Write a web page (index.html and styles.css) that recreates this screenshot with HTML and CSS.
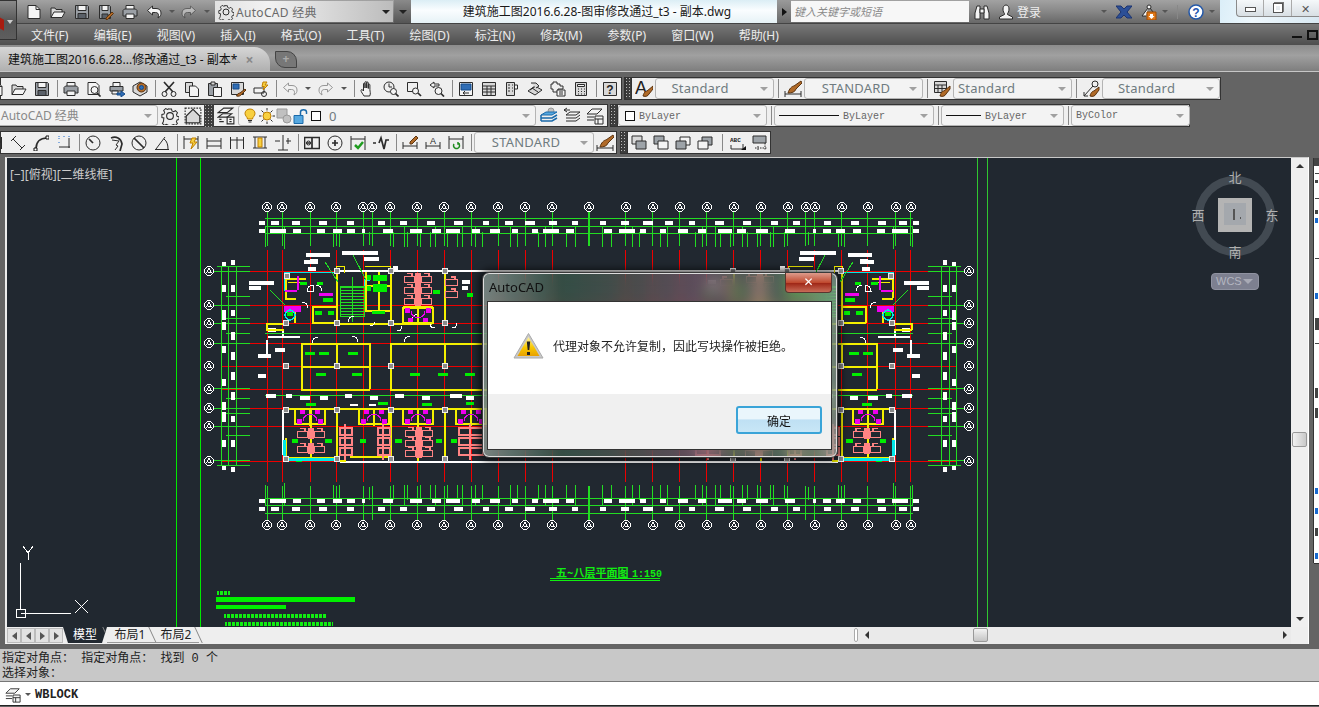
FILE: index.html
```html
<!DOCTYPE html>
<html lang="zh-CN">
<head>
<meta charset="utf-8">
<title>AutoCAD</title>
<link rel="stylesheet" href="styles.css">
</head>
<body>
<svg class="defs" width="0" height="0">
<defs>
<linearGradient id="warn" x1="0" y1="0" x2="0" y2="1"><stop offset="0" stop-color="#fff3a0"/><stop offset=".55" stop-color="#f8c800"/><stop offset="1" stop-color="#e8a000"/></linearGradient>
<symbol id="new" viewBox="0 0 16 16"><path class="wf" d="M2 1.500h8l4 4v9H2z"/><path d="M10 1.500v4h4"/></symbol>
<symbol id="open" viewBox="0 0 16 16"><path class="lf" d="M1 13.500V4h4l1 1.500h6V8"/><path class="wf" d="M1 13.500 4 8h11l-3 5.500z"/></symbol>
<symbol id="save" viewBox="0 0 16 16"><path class="gf" d="M1.500 1.500h12l1 1v12h-13z"/><path class="wf" d="M4 1.500h8v5H4z"/><path class="df" d="M4 9.500h8v5H4z"/></symbol>
<symbol id="saveas" viewBox="0 0 16 16"><path class="gf" d="M1.500 1.500h10l1 1v12h-11z"/><path class="wf" d="M4 1.500h6v5H4z"/><path class="df" d="M4 10h6v4.500H4z"/><path class="org" d="m8 14 6-6 1.500 1.500-6 6H8z"/></symbol>
<symbol id="print" viewBox="0 0 16 16"><path class="wf" d="M4 5V1.500h8V5"/><path class="gf" d="M1 6.500 2.500 5h11L15 6.500V12H1z"/><path class="wf" d="M4 10h8v4.500H4z"/></symbol>
<symbol id="undo" viewBox="0 0 16 16"><path class="wf" d="M6.500 2 1.500 6.500 6.500 11V8.500h3c2 0 3 1 3 3l-.5 2.500c2.500-1.500 3-3 3-5 0-3-2-4.500-5-4.500H6.500z"/></symbol>
<symbol id="redo" viewBox="0 0 16 16"><path class="wf" d="M9.500 2l5 4.500-5 4.500V8.500h-3c-2 0-3 1-3 3l.5 2.500C1.500 12.500 1 11 1 9c0-3 2-4.500 5-4.500h3.500z"/></symbol>
<symbol id="gear" viewBox="0 0 16 16"><path d="M6.500 1h3l.4 2 1.700.8 1.800-1 2 2-1 1.800.6 1.700 2 .4-.1 2.800-1.900.5-.7 1.600 1 1.800-2 2-1.800-1-1.600.7-.5 1.900h-3l-.4-2-1.700-.7-1.800 1-2-2 1-1.800L2 9.900 0 9.500v-3l2-.4.700-1.700-1-1.800 2-2 1.800 1 1.600-.7z" transform="translate(.8 .8) scale(.9)"/><circle cx="8" cy="8" r="3"/></symbol>
<symbol id="prev" viewBox="0 0 16 16"><path class="wf" d="M2 1.500h8l3 3v9H2z"/><circle class="wf" cx="8.500" cy="9" r="3.500"/><path class="thick" d="m11 12 3.500 3.500"/></symbol>
<symbol id="pub" viewBox="0 0 16 16"><path class="wf" d="M4 5V1.500h7V5"/><path class="gf" d="M1 5.500h13V10H1z"/><path class="wf" d="M3 10h6v3H3z"/><path class="blu" d="M8 12h4v-2l4 3-4 3v-2H8z"/></symbol>
<symbol id="d3" viewBox="0 0 16 16"><path class="lf" d="m1 5 7-4 7 4v6l-7 4-7-4z"/><circle class="org" cx="9.500" cy="6.500" r="4.500"/><circle class="blu" cx="9.500" cy="6.500" r="2"/></symbol>
<symbol id="cut" viewBox="0 0 16 16"><path class="thick" d="m3 1 9 10M13 1 4 11"/><circle cx="3.500" cy="13" r="2.500"/><circle cx="12.500" cy="13" r="2.500"/></symbol>
<symbol id="copy" viewBox="0 0 16 16"><path class="lf" d="M1.500 1.500h7v10h-7z"/><path class="wf" d="M5.500 5h6l3 3v7.500h-9z"/></symbol>
<symbol id="paste" viewBox="0 0 16 16"><path class="gf" d="M1.500 2.500h9v12h-9z"/><path class="lf" d="M4 1h4v3H4z"/><path class="wf" d="M6.500 6.500h8v9h-8z"/></symbol>
<symbol id="match" viewBox="0 0 16 16"><path class="lf" d="M1.500 1.500h12v12h-12z"/><path class="blu" d="M3 3h6v5H3z"/><path class="org" d="M15 8l-5 4c-1 0-3 1-3.500 3 2 .5 4 0 5-1.500l4.500-4.500z"/></symbol>
<symbol id="flash" viewBox="0 0 16 16"><path class="wf" d="M1 7h10v5H1z"/><circle cx="11" cy="13" r="2.500"/><path class="yel" d="M10 1h4l-2 3h3l-5 5 1.500-3.500H9z"/></symbol>
<symbol id="hand" viewBox="0 0 16 16"><path class="wf" d="M4 15c-1-2-3-4-3-5.500s1.500-1 2.500.5V3c0-1.300 1.500-1.300 1.500 0v4-5.500c0-1.300 1.700-1.300 1.700 0V7V2c0-1.300 1.600-1.300 1.600 0v5.500V4c0-1.200 1.600-1.200 1.600 0v4.500c0 2.500 1.100 3.500-.2 6.500z"/></symbol>
<symbol id="zrt" viewBox="0 0 16 16"><circle cx="6" cy="6" r="5"/><path d="M6 2.500V6h3"/><circle class="wf" cx="10.500" cy="10.500" r="3"/><path class="thick" d="m12.500 12.500 3 3"/></symbol>
<symbol id="zwin" viewBox="0 0 16 16"><path d="M1.500 1.500h10v9h-10z"/><circle class="wf" cx="9.500" cy="10" r="3"/><path class="thick" d="m12 12 3 3"/></symbol>
<symbol id="zprev" viewBox="0 0 16 16"><path class="wf" d="M5 1 1 4l4 3V5h5V3H5z"/><circle class="wf" cx="9.500" cy="10" r="3.500"/><path class="thick" d="m12 12.500 3 3"/></symbol>
<symbol id="props" viewBox="0 0 16 16"><path class="wf" d="M1.500 1.500h13v13h-13z"/><path class="blu" d="M3 3h10v6H3z"/><path d="M11 12H5l2-2M5 12l2 1.500"/></symbol>
<symbol id="dc" viewBox="0 0 16 16"><path class="lf" d="M1.500 1.500h13v13h-13z"/><path d="M1.500 5h13M6 5v9.500M10 5v9.500M1.500 8h13M1.500 11h13"/></symbol>
<symbol id="tool" viewBox="0 0 16 16"><path class="lf" d="M2.500 1.500h8v13h-8z"/><path d="M4 4h2M8 4h1M4 7h2M8 7h1M4 10h2M8 10h1"/><path class="wf" d="M10.500 4h3v4h-3z"/></symbol>
<symbol id="sheet" viewBox="0 0 16 16"><path class="lf" d="m1 10 7-5 7 4-7 5z"/><path d="m3 9 6-4M5 7l6 4"/><path class="lf" d="M4 2h5l3 3-3 2"/></symbol>
<symbol id="markup" viewBox="0 0 16 16"><path d="M3 1h4v2h3v2h3v3H8v3H3V8H1V3h2z"/><path class="wf" d="M7 9h8v6H7z"/><path d="M9 11h4M9 13h4"/></symbol>
<symbol id="calc" viewBox="0 0 16 16"><path class="lf" d="M2.500 1.500h11v13h-11z"/><path class="wf" d="M4.500 3.500h7v2h-7z"/><path d="M5 8h1M8 8h1M11 8h1M5 10.500h1M8 10.500h1M11 10.500h1M5 13h1M8 13h1M11 13h1"/></symbol>
<symbol id="help" viewBox="0 0 16 16"><path class="lf" d="M1.500 1.500h13v13h-13z"/><text class="t" x="8" y="13" text-anchor="middle">?</text></symbol>
<symbol id="astyle" viewBox="0 0 18 18"><text class="tb" x="0" y="14">A</text><path class="org" d="M18 6 12 11c-1 0-3 1-4 5 3 1 5 0 6-2l4-5z"/></symbol>
<symbol id="dstyle" viewBox="0 0 18 18"><path d="M1 11v6M17 11v6M1 14h16"/><path class="org" d="M17 1 10 6c-2 0-5 3-6 7 4 0 7-1 8-4l6-6z"/></symbol>
<symbol id="tstyle" viewBox="0 0 18 18"><path class="lf" d="M1.500 1.500h12v11h-12z"/><path d="M1.500 5h12M5 5v7.500M9 5v7.500M1.500 8.500h12"/><path class="org" d="M17 6 11 11c-1 0-3 1-4 5 3 1 5 0 6-2l4-5z"/></symbol>
<symbol id="lstyle" viewBox="0 0 18 18"><circle cx="13" cy="4" r="3"/><path d="M11 6 2 16v-4M2 16h4"/><path class="org" d="M17 7 12 11c-1 0-3 1-4 5 3 1 5 0 6-2l3-4z"/></symbol>
<symbol id="ws" viewBox="0 0 16 16"><path class="lf" d="M2 8 8 2l6 6v6H2z"/><path class="dash" d="M1 1h14v14H1z"/></symbol>
<symbol id="laypr" viewBox="0 0 16 16"><path class="wf" d="m1 5 5-4h8L9 5z"/><path class="wf" d="m1 9 4-3h8l-4 3z"/><path d="M2 13h4M2 11h2"/><path class="wf" d="M9 9h6v6H9z"/><path d="M11 11h2M11 13h2"/></symbol>
<symbol id="bulb" viewBox="0 0 16 16"><path class="yel" d="M8 1c3 0 5 2 5 4.500S10.500 9 10.500 11h-5C5.500 9 3 8 3 5.500S5 1 8 1z"/><path d="M6 12.500h4M6.500 14h3"/></symbol>
<symbol id="sun" viewBox="0 0 16 16"><circle class="yel" cx="8" cy="8" r="4"/><path d="M8 0v2.500M8 13.500V16M0 8h2.500M13.500 8H16M2.500 2.500l2 2M11.500 11.500l2 2M2.500 13.500l2-2M11.500 4.500l2-2"/></symbol>
<symbol id="frz" viewBox="0 0 16 16"><path class="gry" d="M1 1h10v9H1z"/><circle class="gry" cx="11" cy="11" r="4"/></symbol>
<symbol id="lock" viewBox="0 0 16 16"><path class="blf" d="M1 7.500h9v8H1z"/><path class="bls" d="M7.500 7.500V4c0-3 6-3 6 0v2"/></symbol>
<symbol id="lay1" viewBox="0 0 18 18"><circle class="gry" cx="11" cy="4" r="3"/><path class="blf" d="m1 8 5-3h11l-5 3z"/><path class="bls" d="M1 11h11l5-3M1 14h11l5-3M1 8v6"/></symbol>
<symbol id="lay2" viewBox="0 0 18 18"><path d="M4 1 1 3l3 2M1 3h6"/><path class="wf" d="m3 8 4-3h10l-4 3z"/><path d="M3 11h10l4-3M3 14h10l4-3"/></symbol>
<symbol id="lay3" viewBox="0 0 18 18"><path class="wf" d="m1 7 5-5h10l-5 5z"/><path d="M1 10h7M1 13h7"/><path class="wf" d="M9 9h8v8H9z"/><path d="M9 12h8M12 12v5"/></symbol>
<symbol id="dlin" viewBox="0 0 16 16"><path d="M1.500 2v12M14.500 2v12M1.500 7h13"/><path class="thick" d="M1.500 7l3-1.500M14.500 7l-3-1.500"/></symbol>
<symbol id="dali" viewBox="0 0 16 16"><path d="M1 6 6 1M10 15l5-5M3 4l9 9"/></symbol>
<symbol id="darc" viewBox="0 0 16 16"><path class="thick" d="M3 14C3 7 7 3 14 3"/><path class="bsq" d="M1 13h3v3H1zM13 1h3v3h-3z"/></symbol>
<symbol id="dord" viewBox="0 0 16 16"><path d="M3 12H14M13 13V3"/><path class="blue" d="M3 1v3M3 7v2M8 1v2M13 1v2"/></symbol>
<symbol id="drad" viewBox="0 0 16 16"><circle cx="8" cy="8" r="7"/><path class="thick" d="m8 8-4-4"/></symbol>
<symbol id="djog" viewBox="0 0 16 16"><path class="thick" d="M3 3c5-2 10 0 11 6l-2 7"/><path d="M4 5l7 1-3 4 2 1-3 4"/></symbol>
<symbol id="ddia" viewBox="0 0 16 16"><circle cx="8" cy="8" r="7"/><path class="thick" d="m3 3 10 10"/></symbol>
<symbol id="dang" viewBox="0 0 16 16"><path d="M1 14.500h14M2 14 11 2"/><path d="M10 4c3 2 4 6 4 10"/></symbol>
<symbol id="dqui" viewBox="0 0 16 16"><path d="M1 1v13M15 1v13M1 4h14"/><path class="yel" d="M9 3h4l-2 4h3L8 14l2-6H7z"/></symbol>
<symbol id="dbas" viewBox="0 0 16 16"><path d="M1 3v11M15 3v11M1 6h14M1 11h14"/></symbol>
<symbol id="dcon" viewBox="0 0 16 16"><path d="M1.500 2v12M8 2v12M14.500 2v12M1.500 5h13"/></symbol>
<symbol id="dspc" viewBox="0 0 16 16"><path d="M1 2h14M1 13h14M3 2v11M13 2v11"/><path class="yel" d="M6 3h4v9H6z"/></symbol>
<symbol id="dbrk" viewBox="0 0 16 16"><path d="M8 0v15M3 15h10M0 6h5M11 6h5M13 3v6"/></symbol>
<symbol id="tol" viewBox="0 0 16 16"><path class="thick" d="M.500 2.500h15v11H.500z"/><path class="thick" d="M8 3v10M2 8h5"/><circle cx="4.500" cy="8" r="2"/></symbol>
<symbol id="cen" viewBox="0 0 16 16"><circle cx="8" cy="8" r="7"/><path class="thick" d="M5 8h6M8 5v6"/></symbol>
<symbol id="ins" viewBox="0 0 16 16"><path d="M1 1v14M15 1v14M1 4h14"/><path class="ck" d="m5 10 3 3 5-6"/></symbol>
<symbol id="jog" viewBox="0 0 16 16"><path class="thick" d="M0 8h3M6 8 8 3l3 11 2-9h3"/></symbol>
<symbol id="ted" viewBox="0 0 16 16"><path d="M1 7v7M15 7v7M1 11h14"/><path class="org" d="M14 1 8 7v2h2l6-6z"/></symbol>
<symbol id="tpos" viewBox="0 0 16 16"><path d="M1 7v7M15 7v7M1 11h14"/><text class="tb2" x="8" y="9" text-anchor="middle">A</text></symbol>
<symbol id="upd" viewBox="0 0 16 16"><path d="M1 1v13M15 1v13M1 4h14"/><path class="grn" d="M6 9a3 3 0 1 0 4-1M10 7v2h2"/></symbol>
<symbol id="dr1" viewBox="0 0 16 16"><path class="lf" d="M1 1h10v8H1z"/><path class="gfd" d="M5 6h10v8H5z"/></symbol>
<symbol id="dr2" viewBox="0 0 16 16"><path class="gfd" d="M1 1h10v8H1z"/><path class="wf" d="M5 6h10v8H5z"/></symbol>
<symbol id="dr3" viewBox="0 0 16 16"><path class="wf" d="M5 2h10v8H5z"/><path class="gfd" d="M1 6h10v8H1z"/></symbol>
<symbol id="dr4" viewBox="0 0 16 16"><path class="gfd" d="M5 2h10v8H5z"/><path class="wf" d="M1 6h10v8H1z"/></symbol>
<symbol id="abc" viewBox="0 0 16 16"><text class="ts" x="0" y="7">ABC</text><path d="M1 10v4h12V9"/><path class="bf" d="M11 15h5v-4z"/></symbol>
<symbol id="hide" viewBox="0 0 16 16"><path class="gfd" d="M1 1h13v7H1z"/><path class="dash" d="M3 13h12M13 8v7M6 11v4"/></symbol>
<symbol id="bino" viewBox="0 0 16 16"><path class="wf" d="M1 9l2-7h3v13H1zM15 9l-2-7h-3v13h5z"/><path class="wf" d="M6 5h4v4H6z"/></symbol>
<symbol id="user" viewBox="0 0 16 16"><path class="wf" d="M8 1c2 0 3 2 3 4 0 2.500-1 4-1.500 4.500v1l5 2.500v2H1.500v-2l5-2.500v-1C6 9 5 7.500 5 5c0-2 1-4 3-4z"/></symbol>
<symbol id="xchg" viewBox="0 0 16 16"><path class="xf" d="M0 2h5l3 3 3-3h5l-5 6 5 6h-5L8 11l-3 3H0l5-6z"/></symbol>
<symbol id="arrdl" viewBox="0 0 16 16"><circle class="wf" cx="8" cy="3" r="2"/><path class="wf" d="M7 4 1 12h4M9 4l3 4"/><path class="orf" d="M6 8h9v8H6z"/><path class="wh" d="M9 10h3v2h1.500l-3 3-3-3H9z"/></symbol>
<symbol id="qm" viewBox="0 0 16 16"><circle class="wfb" cx="8" cy="8" r="7"/><text class="tq" x="8" y="12.500" text-anchor="middle">?</text></symbol>
<symbol id="ax" viewBox="-5 -5 10 10" overflow="visible"><circle class="axc" r="4.400"/><path class="axc" d="M-2.500 2.500 0-3 2.500 2.500M-1.500 1H1.500"/></symbol>
<symbol id="bed" viewBox="0 0 28 11" overflow="visible"><path class="pk" d="M.5 3.500h10v6H.5zM3 .5h5v3M17.500 3.500h10v6h-10zM20 .5h5v3"/><path class="pkf" d="M11 0h6v11h-6z"/></symbol>
<symbol id="room" viewBox="0 0 30 17" overflow="visible"><path class="yw" d="M0 0h30v15H0zM15 0v17"/><path class="mg" d="M5 1h5v4H5zM20 1h5v4h-5zM2 10h5v5H2zM23 10h5v5h-5z"/><path class="mgs" d="M8 12c0-6 7-7 7-7s7 1 7 7"/></symbol>
</defs>
</svg>

<div class="app">
  <button class="appbtn"><span class="appmark"></span><span class="caret"></span></button>
  <header class="titlebar">
    <div class="qat">
      <span class="q"><svg class="ic"><use href="#new"/></svg></span>
      <span class="q"><svg class="ic"><use href="#open"/></svg></span>
      <span class="q"><svg class="ic"><use href="#save"/></svg></span>
      <span class="q"><svg class="ic"><use href="#saveas"/></svg></span>
      <span class="q"><svg class="ic"><use href="#print"/></svg></span>
      <span class="q"><svg class="ic"><use href="#undo"/></svg></span>
      <span class="qc"><span class="caret dim"></span></span>
      <span class="q muted"><svg class="ic"><use href="#redo"/></svg></span>
      <span class="qc"><span class="caret dim"></span></span>
    </div>
    <div class="wsbox"><svg class="ic"><use href="#gear"/></svg><span class="wstext">AutoCAD 经典</span><span class="caret"></span></div>
    <button class="morebtn"><span class="caret"></span></button>
    <div class="doc">建筑施工图2016.6.28-图审修改通过_t3 - 副本.dwg</div>
    <button class="playbtn"><span class="tri"></span></button>
    <div class="search">键入关键字或短语</div>
    <div class="tools">
      <svg class="ic"><use href="#bino"/></svg>
      <svg class="ic user"><use href="#user"/></svg>
      <span class="login">登录</span>
      <span class="caret dim push"></span>
      <svg class="ic xi"><use href="#xchg"/></svg>
      <svg class="ic"><use href="#arrdl"/></svg>
      <span class="caret dim"></span>
      <span class="tsep"></span>
      <svg class="ic qmi"><use href="#qm"/></svg>
      <span class="caret dim"></span>
    </div>
    <div class="glass">
      <div class="winctl"><span class="wc wmin"><i></i></span><span class="wc wmax"><i></i></span><span class="wc wx">✕</span></div>
    </div>
  </header>

  <nav class="menubar">
    <span>文件(F)</span><span>编辑(E)</span><span>视图(V)</span><span>插入(I)</span><span>格式(O)</span><span>工具(T)</span><span>绘图(D)</span><span>标注(N)</span><span>修改(M)</span><span>参数(P)</span><span>窗口(W)</span><span>帮助(H)</span>
    <span class="mdi"><i class="mmin"></i><i class="mmax"></i></span>
  </nav>

  <div class="tabs">
    <div class="tab"><span>建筑施工图2016.6.28...修改通过_t3 - 副本*</span><b>×</b></div>
    <div class="newtab">+</div>
  </div>

  <section class="toolbars">
    <div class="row">
      <div class="panel p1a">
        <span class="b"><svg class="ic"><use href="#new"/></svg></span><span class="b"><svg class="ic"><use href="#open"/></svg></span><span class="b"><svg class="ic"><use href="#save"/></svg></span><i class="s"></i>
        <span class="b"><svg class="ic"><use href="#print"/></svg></span><span class="b"><svg class="ic"><use href="#prev"/></svg></span><span class="b"><svg class="ic"><use href="#pub"/></svg></span><span class="b"><svg class="ic"><use href="#d3"/></svg></span><i class="s"></i>
        <span class="b"><svg class="ic"><use href="#cut"/></svg></span><span class="b"><svg class="ic"><use href="#copy"/></svg></span><span class="b"><svg class="ic"><use href="#paste"/></svg></span><span class="b"><svg class="ic"><use href="#match"/></svg></span><span class="b"><svg class="ic"><use href="#flash"/></svg></span><i class="s"></i>
        <span class="b off"><svg class="ic"><use href="#undo"/></svg></span><span class="bc"><span class="caret dim"></span></span><span class="b off"><svg class="ic"><use href="#redo"/></svg></span><span class="bc"><span class="caret dim"></span></span><i class="s"></i>
        <span class="b"><svg class="ic"><use href="#hand"/></svg></span><span class="b"><svg class="ic"><use href="#zrt"/></svg></span><span class="b"><svg class="ic"><use href="#zwin"/></svg></span><span class="b"><svg class="ic"><use href="#zprev"/></svg></span><i class="s"></i>
        <span class="b"><svg class="ic"><use href="#props"/></svg></span><span class="b"><svg class="ic"><use href="#dc"/></svg></span><span class="b"><svg class="ic"><use href="#tool"/></svg></span><span class="b"><svg class="ic"><use href="#sheet"/></svg></span><span class="b"><svg class="ic"><use href="#markup"/></svg></span><span class="b"><svg class="ic"><use href="#calc"/></svg></span><i class="s"></i>
        <span class="b"><svg class="ic"><use href="#help"/></svg></span>
      </div>
      <div class="panel p1b">
        <i class="grip"></i>
        <span class="b"><svg class="ic lg"><use href="#astyle"/></svg></span>
        <div class="dd c119 center">Standard</div><i class="s2"></i>
        <span class="b"><svg class="ic lg"><use href="#dstyle"/></svg></span>
        <div class="dd c119 center caps">STANDARD</div><i class="s2"></i>
        <span class="b"><svg class="ic lg"><use href="#tstyle"/></svg></span>
        <div class="dd c119">Standard</div><i class="s2"></i>
        <span class="b"><svg class="ic lg"><use href="#lstyle"/></svg></span>
        <div class="dd c118 center">Standard</div>
      </div>
    </div>

    <div class="row">
      <div class="panel p2a">
        <div class="dd c168 clipws">AutoCAD 经典</div>
        <span class="b"><svg class="ic lg"><use href="#gear"/></svg></span><span class="b"><svg class="ic lg"><use href="#ws"/></svg></span>
        <i class="darkgrip"></i>
        <span class="b"><svg class="ic lg"><use href="#laypr"/></svg></span>
        <div class="dd c298 layer">
          <svg class="ic lay"><use href="#bulb"/></svg><svg class="ic lay"><use href="#sun"/></svg><svg class="ic lay"><use href="#frz"/></svg><svg class="ic lay"><use href="#lock"/></svg><span class="swatch"></span><span class="lname">0</span>
        </div>
        <span class="b"><svg class="ic lg"><use href="#lay1"/></svg></span><span class="b"><svg class="ic lg"><use href="#lay2"/></svg></span><span class="b"><svg class="ic lg"><use href="#lay3"/></svg></span>
      </div>
      <div class="panel p2b">
        <i class="grip g8"></i>
        <div class="dd c149 mono"><span class="swatch"></span><span class="mtext">ByLayer</span></div><i class="s2"></i>
        <div class="dd c160 mono"><span class="lw w60"></span><span class="mtext">ByLayer</span></div><i class="s2"></i>
        <div class="dd c123 mono"><span class="lw w35"></span><span class="mtext">ByLayer</span></div><i class="s2"></i>
        <div class="dd c119 mono"><span class="mtext up1">ByColor</span></div>
      </div>
    </div>

    <div class="row">
      <div class="panel p3a">
        <span class="b"><svg class="ic"><use href="#dlin"/></svg></span><span class="b"><svg class="ic"><use href="#dali"/></svg></span><span class="b"><svg class="ic"><use href="#darc"/></svg></span><span class="b"><svg class="ic"><use href="#dord"/></svg></span><i class="s"></i>
        <span class="b"><svg class="ic"><use href="#drad"/></svg></span><span class="b"><svg class="ic"><use href="#djog"/></svg></span><span class="b"><svg class="ic"><use href="#ddia"/></svg></span><span class="b"><svg class="ic"><use href="#dang"/></svg></span><i class="s"></i>
        <span class="b"><svg class="ic"><use href="#dqui"/></svg></span><span class="b"><svg class="ic"><use href="#dbas"/></svg></span><span class="b"><svg class="ic"><use href="#dcon"/></svg></span><span class="b"><svg class="ic"><use href="#dspc"/></svg></span><span class="b"><svg class="ic"><use href="#dbrk"/></svg></span><i class="s"></i>
        <span class="b"><svg class="ic"><use href="#tol"/></svg></span><span class="b"><svg class="ic"><use href="#cen"/></svg></span><span class="b"><svg class="ic"><use href="#ins"/></svg></span><span class="b"><svg class="ic"><use href="#jog"/></svg></span><i class="s"></i>
        <span class="b"><svg class="ic"><use href="#ted"/></svg></span><span class="b"><svg class="ic"><use href="#tpos"/></svg></span><span class="b"><svg class="ic"><use href="#upd"/></svg></span><i class="s"></i>
        <div class="dd c120 center caps">STANDARD</div>
        <span class="b"><svg class="ic lg"><use href="#dstyle"/></svg></span>
      </div>
      <div class="panel p3b">
        <i class="grip g8"></i>
        <span class="b22"><svg class="ic"><use href="#dr1"/></svg></span><span class="b22"><svg class="ic"><use href="#dr2"/></svg></span><span class="b22"><svg class="ic"><use href="#dr3"/></svg></span><span class="b22"><svg class="ic"><use href="#dr4"/></svg></span><i class="s3"></i>
        <span class="b22"><svg class="ic"><use href="#abc"/></svg></span><span class="b22"><svg class="ic"><use href="#hide"/></svg></span>
      </div>
    </div>
  </section>

  <main class="workspace">
    <div class="viewport">
      <div class="upper">
        <div class="canvas">
          <svg class="cad" viewBox="7 158 1284 469" width="1284" height="469">
            <defs>
              <g id="dimTop">
                <path class="g" d="M265 218.500H589M265 226.500H589M265 233.500H589"/>
                <path class="g" d="M267.500 212V246M282.500 212V246M310.500 212V246M336.500 212V246M363.500 212V246M372.500 212V246M390.500 212V246M417.500 212V246M444.500 212V246M471.500 212V246M498.500 212V246M525.500 212V246M552.500 212V246M589.500 212V246"/>
                <path class="g" d="M265.500 226V247M284.500 226V249M333.500 232V247M339.500 232V247M369.500 232V245M393.500 232V247M404.500 226V247M407.500 232V247M420.500 232V247M430.500 232V247M435.500 226V247M447.500 232V247M457.500 232V247M462.500 226V247M475.500 226V247M482.500 232V247M510.500 226V247M517.500 232V247M538.500 232V247M545.500 226V247M566.500 232V247M575.500 226V247"/>
                <path class="wdash1" d="M259 223H589"/>
                <path class="wdash2" d="M259 231H589"/>
              </g>
              <g id="axTop">
                <use href="#ax" x="267" y="207" width="10" height="10"/><use href="#ax" x="282" y="207" width="10" height="10"/><use href="#ax" x="310" y="207" width="10" height="10"/><use href="#ax" x="336" y="207" width="10" height="10"/><use href="#ax" x="363" y="207" width="10" height="10"/><use href="#ax" x="372" y="207" width="10" height="10"/><use href="#ax" x="390" y="207" width="10" height="10"/><use href="#ax" x="417" y="207" width="10" height="10"/><use href="#ax" x="444" y="207" width="10" height="10"/><use href="#ax" x="471" y="207" width="10" height="10"/><use href="#ax" x="498" y="207" width="10" height="10"/><use href="#ax" x="525" y="207" width="10" height="10"/><use href="#ax" x="552" y="207" width="10" height="10"/><use href="#ax" x="589" y="207" width="10" height="10"/>
              </g>
              <g id="axBot">
                <use href="#ax" x="267" y="525" width="10" height="10"/><use href="#ax" x="282" y="525" width="10" height="10"/><use href="#ax" x="310" y="525" width="10" height="10"/><use href="#ax" x="336" y="525" width="10" height="10"/><use href="#ax" x="363" y="525" width="10" height="10"/><use href="#ax" x="390" y="525" width="10" height="10"/><use href="#ax" x="417" y="525" width="10" height="10"/><use href="#ax" x="444" y="525" width="10" height="10"/><use href="#ax" x="471" y="525" width="10" height="10"/><use href="#ax" x="498" y="525" width="10" height="10"/><use href="#ax" x="525" y="525" width="10" height="10"/><use href="#ax" x="552" y="525" width="10" height="10"/><use href="#ax" x="589" y="525" width="10" height="10"/>
              </g>
              <g id="axLeft">
                <use href="#ax" x="209" y="271" width="10" height="10"/><use href="#ax" x="209" y="305" width="10" height="10"/><use href="#ax" x="209" y="323" width="10" height="10"/><use href="#ax" x="209" y="343" width="10" height="10"/><use href="#ax" x="209" y="366" width="10" height="10"/><use href="#ax" x="209" y="389" width="10" height="10"/><use href="#ax" x="209" y="408" width="10" height="10"/><use href="#ax" x="209" y="426" width="10" height="10"/><use href="#ax" x="209" y="461" width="10" height="10"/>
              </g>
              <g id="dimLeft">
                <path class="g" d="M221.500 266V366M228.500 266V366M236.500 266V366"/>
                <path class="g" d="M217 266.500H250M214 271.500H250M226 296.500H250M214 305.500H250M226 318.500H250M214 323.500H250M226 333.500H250M214 343.500H250"/>
                <path class="wv1" d="M224 262V366"/>
                <path class="wv2" d="M233 260V366"/>
              </g>
              <g id="half">
                <path class="r" d="M222 271.500H589M222 305.500H589M222 323.500H589M222 343.500H589M222 366.500H589M222 389.500H589M222 408.500H589M222 426.500H589M222 461.500H589"/>
                <path class="r" d="M267.500 250V482M282.500 250V482M310.500 250V482M336.500 250V482M363.500 250V482M390.500 250V482M417.500 250V482M444.500 250V482M471.500 250V482M498.500 250V482M525.500 250V482M552.500 250V482"/>
                <use href="#dimTop"/>
                <use href="#dimTop" transform="matrix(1 0 0 -1 0 732)"/>
                <use href="#dimLeft"/>
                <use href="#dimLeft" transform="matrix(1 0 0 -1 0 732)"/>
                <path class="w2" d="M340 270.500H589M283 330V338M268 337H300M267 340V356M283 410V455M340 461.500H589M350 405H358M369 405H376"/>
                <path class="wblob" d="M306 255H330M310 261H318M342 253H378M364 259H379M249 283H274M249 288H261M304 262H318M308 269H316M393 268H398M462 282H470M462 288H468M258 356H271M258 376H266M268 330H276"/>
                <path class="c" d="M284 272.500H336M284.500 272V291M370 280H365V300"/>
                <path class="y2" d="M336.500 270V323M390.500 270V323M336 323.500H390M365.500 272V310M365 310.500H390M365 285.500H390M378.500 272V310M285 278.500H306M285.500 278V298M285 298.500H296M312 306.500H336M312 322.500H336M312.500 306V323M301 343.500H370M301.500 343V389M370 343V389M301 366.500H370M301 389.500H370M336.500 343V366M390 343.500H589M390.500 343V389M390 389.500H589M444.500 343V366M266 323.500H284M266 329.500H284M266.500 323V330M403 306.500H433M444.500 270V323M432 323.500H390M295 306V323"/>
                <path class="y1" d="M288 282H306M336 271V266H344V273M365 266H390V271"/>
                <path class="stair" d="M352 287V316"/>
                <path class="g" d="M340.500 286.500H364.500V316H340.500ZM352 277V322M265 333.500H589M265 395.500H589M325 262 338 282M353 255 366 280M270 290 285 305"/>
                <path class="m" d="M284 306h17v6H284zM297 276h2v14h-2zM319 293h14v3H319zM285 290h12v2H285z"/>
                <circle class="c" cx="290" cy="315" r="5"/>
                <path class="wa" d="M307 291c0-4 3-6 6-6v6zM322 291c0-4-3-6-6-6M302 302c3 0 6 2 6 6M348 322c0-4 3-6 6-6M412 320c0-4 3-6 6-6M397 331c3 0 5-2 5-5M452 328c3 0 5-2 5-5M435 328c-3 0-5-2-5-5M370 326c3 0 5-2 5-4M404 342c0-4 3-6 6-6M358 342c0-4-3-6-6-6M312 343c0-4 3-6 6-6"/>
                <path class="gr" d="M287 312h6v4H287zM300 282h7v3H300zM317 282h6v3H317zM323 298h10v4H323zM367 275h4v5H367zM373 275h14v6H373zM373 284h14v8H373zM367 286h4v5H367zM372 311h13v3H372zM433 290h7v4H433zM467 293h6v4H467zM315 311h7v4H315zM328 311h6v4H328zM305 352h10v3H305zM319 352h10v3H319zM348 352h10v3H348zM316 373h10v3H316zM352 373h10v3H352zM410 373h10v3H410zM438 373h10v3H438zM465 373h10v3H465zM292 439h6v4H292zM325 439h7v4H325zM360 439h6v4H360zM395 439h7v4H395zM436 439h6v4H436zM451 439h6v4H451zM296 458h6v4H296zM306 403h10v3H306zM378 402h10v3H378zM422 403h10v3H422zM466 402h8v3H466z"/>
                <g><use href="#bed" x="404" y="273" width="28" height="11"/><use href="#bed" x="404" y="284" width="28" height="11"/><use href="#bed" x="404" y="295" width="28" height="11"/></g>
                <path class="pk" d="M445.500 279.500h12v6h-12zM445.500 291.500h12v6h-12zM451 277h4v2M451 289h4v2"/>
                <path class="wblob" d="M266 396H276M286 396H292M300 398H310M320 398H328M345 396H352M370 398H378M395 396H404M422 398H430M450 396H462M466 398H474M275 350H285"/>
                <path class="y2" d="M284 408.500H589M310.500 408V461M336.500 408V461M390.500 408V461M417.500 408V461M444.500 408V461M286 457.500H336M285.500 438V458M336 461H346M390 457H350"/>
                <path class="c3" d="M284 459.500H336M284.500 440V459"/>
                <use href="#room" x="295" y="409" width="30" height="17"/><use href="#room" x="403" y="409" width="30" height="17"/><use href="#room" x="456" y="409" width="30" height="17"/><use href="#room" x="359" y="409" width="30" height="17"/>
                <g transform="matrix(1 0 0 -1 0 630)"><use href="#room" x="403" y="307" width="30" height="17"/></g>
                <use href="#bed" x="297" y="428" width="28" height="11"/><use href="#bed" x="297" y="443" width="28" height="11"/>
                <use href="#bed" x="405" y="427" width="28" height="11"/><use href="#bed" x="405" y="437" width="28" height="11"/><use href="#bed" x="405" y="447" width="28" height="11"/>
                <path class="pk2" d="M339.500 427.500h12v7h-12zM339.500 437.500h12v7h-12zM339.500 447.500h12v7h-12zM345 424v36M377.500 427.500h12v7h-12zM377.500 437.500h12v7h-12zM377.500 447.500h12v7h-12zM383 424v36M458.500 427.500h24v7h-24zM458.500 437.500h24v7h-24zM458.500 447.500h24v7h-24zM470 424v36"/>
                <path class="cmk" d="M284.500 273.500h5v5h-5zM334.500 268.500h5v5h-5zM388.500 268.500h5v5h-5zM442.500 268.500h5v5h-5zM283.500 320.500h5v5h-5zM334.500 320.500h5v5h-5zM388.500 320.500h5v5h-5zM442.500 320.500h5v5h-5zM283.500 363.500h5v5h-5zM334.500 363.500h5v5h-5zM388.500 363.500h5v5h-5zM442.500 363.500h5v5h-5zM283.500 407.500h5v5h-5zM334.500 407.500h5v5h-5zM388.500 407.500h5v5h-5zM442.500 407.500h5v5h-5zM283.500 456.500h5v5h-5zM334.500 456.500h5v5h-5zM388.500 456.500h5v5h-5zM442.500 456.500h5v5h-5z"/>
              </g>
              <g id="axes" transform="translate(-5 -5)"><use href="#axTop"/><use href="#axBot"/><use href="#axLeft"/></g>
            </defs>
            <path class="gl" d="M176.500 158V627M200.500 158V627"/>
            <path class="gl2" d="M977.500 158V627M987.500 158V627"/>
            <use href="#half"/>
            <use href="#half" transform="matrix(-1 0 0 1 1178 0)"/>
            <use href="#axes"/>
            <use href="#axes" transform="matrix(-1 0 0 1 1178 0)"/>
            <text class="ptitle" x="556" y="577">五~八层平面图</text><text class="ptitle2" x="632" y="577">1:150</text>
            <path class="gnote" d="M550 578.500H660M550 580.500H660"/>
            <path class="gnoteb" d="M216 599.500H355"/>
            <path class="gnoteb2" d="M216 607H286"/>
            <path class="gdots" d="M224 616H327M225 623.500H333M217 593H230"/>
          </svg>
          <div class="vplabel">[−][俯视][二维线框]</div>
          <div class="cube">
            <div class="ring"></div>
            <div class="face"><div class="faceinner"><i class="f1"></i><i class="f2"></i></div></div>
            <span class="dir n">北</span><span class="dir s-dir">南</span><span class="dir w">西</span><span class="dir e">东</span>
          </div>
          <div class="wcs">WCS<i></i></div>
          <svg class="ucs" viewBox="0 0 80 80" width="80" height="80">
            <path d="M5.500 17V63M1.500 63.500H10.500V71.500H1.500ZM5.500 67.500H56M60 54 73 67M73 54 60 67M8 0 13 7 18 0M13 7V14"/>
          </svg>
        </div>
        <aside class="vscroll">
          <span class="up"></span>
          <span class="thumb"></span>
          <span class="down"></span>
        </aside>
      </div>
      <div class="lower">
        <div class="nav"><span class="nb"><i class="first"></i></span><span class="nb"><i class="left"></i></span><span class="nb"><i class="right"></i></span><span class="nb"><i class="last"></i></span></div>
        <div class="ltab active">模型</div>
        <div class="ltab">布局1</div>
        <div class="ltab">布局2</div>
        <div class="lfill"></div>
        <span class="lhandle"></span>
        <div class="hscroll"><i class="hl"></i><span class="hthumb"></span><i class="hr"></i></div>
      </div>
    </div>
    <aside class="palette">
      <svg viewBox="0 0 5 405" width="5" height="405"><path class="pm1" d="M0 0h5v8H0zM1 15h4v1H1zM1 22h3v3H1zM1 40h4v1H1zM1 52h3v4H1zM1 100h4v1H1zM1 160h4v12H1zM1 185h4v1H1zM1 230h3v10H1zM1 250h3v10H1zM1 370h3v8H1z"/><path class="pm2" d="M1 60h3v5H1zM1 135h3v6H1zM1 330h3v6H1zM1 350h3v6H1zM1 395h3v6H1z"/></svg>
    </aside>
  </main>

  <section class="cmdhist">
    <div>指定对角点： 指定对角点： 找到 0 个</div>
    <div>选择对象：</div>
  </section>
  <section class="cmdline">
    <svg class="ic"><use href="#lay3"/></svg>
    <span class="caret dim"></span>
    <b>WBLOCK</b>
  </section>

  <div class="dialog" role="dialog">
    <div class="dlgtitle">AutoCAD</div>
    <span class="dlgclose">✕</span>
    <div class="dlgbody">
      <div class="dlgmsg">
        <svg class="warn" viewBox="0 0 31 28" width="31" height="28">
          <path class="wo" d="M15.500 1.500 30 26H1z"/>
          <path class="wi" d="M15.500 5 26.500 24H4.500z"/>
          <path class="wb" d="M13.800 9.500h3.400L16.300 18h-1.600zM14 20h3v3h-3z"/>
        </svg>
        <p>代理对象不允许复制，因此写块操作被拒绝。</p>
      </div>
      <div class="dlgfoot"><button class="ok">确定</button></div>
    </div>
  </div>
</div>
</body>
</html>
```

FILE: styles.css
```css
* { box-sizing: border-box; }
html, body { margin: 0; padding: 0; background: #646464; }
body { font: 12px "Noto Sans", "Noto Sans CJK SC", sans-serif; overflow: hidden; }
.defs { position: absolute; }
button { font: inherit; padding: 0; border: 0; }
.app { position: relative; width: 1319px; height: 707px; display: flex; flex-direction: column; overflow: hidden; }

/* icon paint */
.ic { width: 16px; height: 16px; display: block; flex: none; fill: none; stroke: #2c2c2c; stroke-width: 1; }
.ic.lg { width: 18px; height: 18px; }
.wf { fill: #f4f4f4; }
.lf { fill: #d8d8d8; }
.gf { fill: #9a9fa5; }
.df { fill: #5a6068; }
.gfd { fill: #9da3a8; }
.org { fill: #b06a28; stroke: #5c3410; }
.orf { fill: #e07818; stroke: #a04c00; }
.yel { fill: #f8d040; stroke: #c08000; }
.blu { fill: #2f6db5; stroke: #154a88; }
.blf { fill: #56a8e0; stroke: #1a6aaa; }
.bls { stroke: #1a6aaa; stroke-width: 1.500; }
.blue { stroke: #1a6ad0; stroke-dasharray: 1 1; }
.gry { fill: #c0c0c0; stroke: #999; }
.thick { stroke-width: 1.700; }
.bsq { fill: #fff; stroke: #111; }
.bf { fill: #111; stroke: none; }
.ck { stroke: #1f9c1f; stroke-width: 2.500; }
.grn { stroke: #1f8c1f; stroke-width: 1.500; }
.dash { stroke-dasharray: 1.500 1; }
.xf { fill: #2c4f96; stroke: #1c3470; }
.wh { fill: #fff; stroke: none; }
.wfb { fill: #fff; stroke: #2458a8; stroke-width: 1.500; }
.t { font: bold 12px "Liberation Sans", sans-serif; fill: #222; stroke: none; }
.tb { font: 18px "Liberation Sans", sans-serif; fill: #222; stroke: none; }
.tb2 { font: 9px "Liberation Sans", sans-serif; fill: #222; stroke: none; }
.ts { font: bold 6px "Liberation Mono", monospace; fill: #222; stroke: none; }
.tq { font: bold 12px "Liberation Sans", sans-serif; fill: #1f55b0; stroke: none; }

.caret { display: inline-block; width: 0; height: 0; border: 4px solid transparent; border-top: 4px solid #222; border-bottom: 0; flex: none; }
.caret.dim { border-left-width: 3px; border-right-width: 3px; border-top: 3px solid #555; }

/* application button, overlapping the title and menu bars */
.appbtn { position: absolute; z-index: 2; left: 0; top: 0; width: 17px; height: 40px; background: linear-gradient(#8a8a8a, #555 55%, #5e5e5e); border: 1px solid #333; border-left: 0; overflow: hidden; }
.appbtn .caret { position: absolute; left: 7px; top: 19px; border-top-color: #ccc; border-left-width: 3px; border-right-width: 3px; }
.appmark { position: absolute; left: -2px; top: 17px; width: 6px; height: 11px; background: #a81c10; transform: skewY(30deg); }

/* title bar */
.titlebar { height: 24px; display: flex; align-items: stretch; background: linear-gradient(#a2a2a2, #8a8a8a 45%, #686868); border-bottom: 1px solid #444; flex: none; }
.qat { display: flex; align-items: center; padding-left: 22px; width: 215px; flex: none; }
.q { width: 24px; display: flex; justify-content: center; }
.qc { width: 11px; display: flex; justify-content: center; }
.muted, .off { opacity: .45; }
.wsbox { width: 178px; height: 21px; margin-top: 1px; background: linear-gradient(90deg, #e2e2e2, #f2f2f2 30%, #bcbcbc); display: flex; align-items: center; padding: 0 3px 0 3px; flex: none; }
.wstext { margin-left: 2px; flex: 1; color: #6a6a6a; font-size: 12px; letter-spacing: .3px; }
.morebtn { width: 17px; background: linear-gradient(#8a8a8a, #555); display: flex; align-items: center; justify-content: center; margin-left: 1px; flex: none; }
.doc { width: 366px; background: linear-gradient(180deg, #dbeef5, #fafdff 45%, #e6f2f6); color: #1a1a1a; font-size: 12px; text-align: center; line-height: 23px; padding-left: 6px; flex: none; white-space: nowrap; }
.playbtn { width: 14px; background: linear-gradient(#9a9a9a, #6a6a6a); display: flex; align-items: center; justify-content: center; flex: none; }
.tri { width: 0; height: 0; border: 4px solid transparent; border-left: 5px solid #111; border-right: 0; }
.search { width: 178px; height: 21px; margin-top: 1px; background: #f7f7f7; color: #8a8a8a; font-size: 11px; font-style: italic; line-height: 21px; padding-left: 3px; flex: none; }
.tools { width: 251px; display: flex; align-items: center; padding: 0 5px 0 5px; flex: none; }
.tools .user { margin-left: 8px; }
.login { color: #eee; font-size: 12px; margin-left: 3px; }
.xi { margin-left: 14px; }
.tools .caret + .ic, .xi + .ic { margin-left: 9px; }
.tools .caret { margin-left: 5px; }
.tools .push { margin-left: auto; }
.tsep { width: 1px; height: 14px; background: #888; margin: 0 10px 0 9px; }
.glass { flex: 1; background: linear-gradient(100deg, #dbeef8, #eef7fc 35%, #d8e8f2); display: flex; justify-content: flex-end; }
.winctl { width: 83px; height: 17px; display: flex; border: 1px solid #8a8a8a; border-top: 0; border-right: 0; border-radius: 0 0 0 4px; background: linear-gradient(#f5f8fa, #d8dfe4); }
.wc { width: 28px; border-right: 1px solid #aaa; display: flex; align-items: center; justify-content: center; font-size: 11px; color: #555; }
.wc:last-child { border-right: 0; }
.wmin i { display: block; width: 11px; height: 5px; border: 1px solid #555; background: #fff; margin-top: 3px; }
.wmax i { display: block; width: 10px; height: 10px; border: 1px solid #555; box-shadow: inset 0 0 0 2px #fff, 1px -1px 0 #777; }

/* menu */
.menubar { height: 21px; flex: none; display: flex; align-items: center; gap: 25.200px; padding-left: 31px; background: linear-gradient(#787878, #4e4e4e); color: #ececec; font-size: 12px; position: relative; }
.mdi { margin-left: auto; display: flex; align-items: center; gap: 5px; padding-right: 1px; }
.mmin { width: 10px; height: 2px; background: #111; margin-top: 5px; }
.mmax { width: 11px; height: 10px; border: 2px solid #111; border-top-width: 2px; }

/* doc tabs */
.tabs { height: 27px; flex: none; display: flex; align-items: flex-end; background: linear-gradient(#8c8c8c, #a0a0a0 40%, #7e7e7e); border-bottom: 1px solid #c6c6c6; }
.tab { width: 270px; height: 24px; background: linear-gradient(#d6d6d6, #b0b0b0); border-radius: 0 16px 0 0; display: flex; align-items: center; padding-left: 8px; color: #111; font-size: 12px; white-space: nowrap; }
.tab b { margin-left: 8px; color: #888; font-size: 14px; }
.newtab { width: 22px; height: 17px; margin: 0 0 3px 5px; background: #777; border: 1px solid #444; border-radius: 0 10px 0 10px; color: #aaa; text-align: center; line-height: 14px; font-weight: bold; }

/* toolbars */
.toolbars { height: 85px; flex: none; background: #646464; padding-top: 5px; display: flex; flex-direction: column; gap: 4px; overflow: hidden; }
.row { height: 23px; display: flex; flex: none; }
.panel { height: 23px; display: flex; align-items: center; background: #efefef; box-shadow: inset 0 0 0 1px #333; flex: none; overflow: hidden; }
.p1a { width: 622px; }
.p1a > .b:first-child { margin-left: -15.500px; }
.p1b { margin-left: 2px; width: 597px; padding-left: 1px; }
.p2a { width: 608px; }
.p2b { margin-left: 2px; width: 580px; }
.p3a { width: 617px; }
.p3a > .b:first-child { margin-left: -16.500px; }
.p3b { margin-left: 3px; width: 151px; }
.b { width: 23px; height: 21px; flex: none; display: flex; align-items: center; justify-content: center; }
.bc { width: 13px; flex: none; display: flex; justify-content: center; }
.b22 { width: 22px; height: 21px; flex: none; display: flex; align-items: center; justify-content: center; }
.s { width: 6px; height: 19px; flex: none; position: relative; }
.s::after, .s2::after, .s3::after { content: ""; position: absolute; left: 50%; top: 1px; bottom: 1px; width: 1px; background: #888; }
.s2 { width: 7px; height: 21px; flex: none; position: relative; }
.s3 { width: 11px; height: 19px; flex: none; position: relative; }
.grip { width: 7px; height: 23px; flex: none; background: #3d3d3d radial-gradient(circle, #bbb .7px, transparent 1px) 0 0 / 3px 3px; box-shadow: inset 0 0 0 1px #333; }
.grip.g8 { width: 8px; }
.darkgrip { width: 10px; height: 23px; flex: none; background: #3d3d3d radial-gradient(circle, #aaa .7px, transparent 1px) 0 0 / 3px 3px; }
.dd { height: 21px; flex: none; display: flex; align-items: center; position: relative; background: #f3f3f3; border: 1px solid #b4b4b4; border-radius: 3px; color: #6f7b80; font-size: 13px; letter-spacing: .2px; padding: 0 14px 2px 4px; white-space: nowrap; overflow: hidden; }
.dd::after { content: ""; position: absolute; right: 5px; top: 8px; border: 4px solid transparent; border-top: 4px solid #a0a0a0; border-bottom: 0; }
.center { justify-content: center; padding-right: 33px; }
.center.caps { padding-right: 19px; }
.c118 { width: 118px; } .c119 { width: 119px; } .c120 { width: 120px; } .c123 { width: 123px; } .c149 { width: 149px; } .c160 { width: 160px; } .c168 { width: 168px; margin-left: -10px; padding-left: 10px; } .c298 { width: 298px; margin: 0 1px; }
.clipws { color: #888; font-size: 12px; letter-spacing: 0; }
.layer { padding-left: 2px; padding-bottom: 0; }
.lay { margin-left: 1px; }
.swatch { width: 10px; height: 10px; border: 1px solid #111; background: #fff; flex: none; margin: 0 4px 0 2px; }
.lname { color: #707a80; margin-left: 4px; }
.mono { font: 10px "Liberation Mono", monospace; color: #666; padding: 0 14px 0 4px; letter-spacing: 0; }
.mtext { display: block; padding-top: 2px; }
.mtext.up1 { padding-top: 0; }
.lw { height: 1px; background: #111; flex: none; margin-right: 4px; }
.w60 { width: 60px; } .w35 { width: 35px; }

/* workspace */
.workspace { height: 492px; flex: none; display: flex; background: #646464; }
.viewport { margin-left: 5px; width: 1304px; height: 487px; background: #eee; border: 2px solid #ececec; border-top: 1px solid #c9c9c9; border-right: 1px solid #fff; border-bottom: 1px solid #fff; display: flex; flex-direction: column; }
.upper { display: flex; height: 469px; flex: none; }
.canvas { position: relative; width: 1284px; height: 469px; background: #212830; overflow: hidden; flex: none; }
.cad { display: block; fill: none; shape-rendering: crispEdges; }
.vscroll { width: 17px; background: #efefef; position: relative; }
.up, .down { position: absolute; left: 5px; border: 4px solid transparent; }
.up { top: 6px; border-top: 0; border-bottom: 4px solid #333; }
.down { bottom: 6px; border-bottom: 0; border-top: 4px solid #333; }
.thumb { position: absolute; left: 1px; top: 274px; width: 15px; height: 15px; background: linear-gradient(90deg, #f2f2f2, #c8c8c8); border: 1px solid #999; border-radius: 2px; }
.lower { height: 17px; flex: none; display: flex; background: #eee; font-size: 12px; color: #222; }
.nav { display: flex; width: 56px; }
.nb { width: 14px; height: 15px; margin-top: 1px; background: #e2e2e2; border: 1px solid #bbb; display: flex; align-items: center; justify-content: center; }
.nb i { width: 0; height: 0; border: 4px solid transparent; }
.left, .first { border-left: 0 !important; border-right: 5px solid #555 !important; }
.right, .last { border-right: 0 !important; border-left: 5px solid #555 !important; }
.ltab { width: 46px; height: 16px; text-align: center; line-height: 16px; position: relative; border-bottom: 1px solid #999; font-size: 12px; }
.ltab::after { content: ""; position: absolute; right: 0; top: 0; height: 16px; border-right: 1px solid #888; transform: skewX(25deg); }
.ltab.active { background: #212830; color: #fff; width: 44px; clip-path: polygon(0 0, 100% 0, calc(100% - 5px) 100%, 5px 100%); border: 0; }
.lfill { width: 655px; flex: none; }
.lhandle { width: 4px; height: 14px; margin-top: 1px; border: 1px solid #aaa; border-radius: 2px; background: #fff; flex: none; }
.hscroll { flex: 1; display: flex; align-items: center; position: relative; margin-right: 17px; background: #eaeaea; }
.hl, .hr { position: absolute; top: 4px; border: 4px solid transparent; }
.hl { left: 7px; border-left: 0; border-right: 4px solid #333; }
.hr { right: 4px; border-right: 0; border-left: 4px solid #333; }
.hthumb { position: absolute; left: 115px; top: 1px; width: 15px; height: 14px; background: linear-gradient(#f2f2f2, #c4c4c4); border: 1px solid #999; border-radius: 2px; }
.palette { margin: 1px 0 0 5px; width: 5px; height: 405px; background: #fff; box-shadow: -1px 0 0 #333, 0 1px 0 #333; flex: none; }
.palette svg { display: block; }
.pm1 { fill: #444; }
.pm2 { fill: #1a6ad0; }

/* drawing */
.g { stroke: #22dd22; stroke-width: 1; }
.gl { stroke: #00e800; stroke-width: 1; }
.gl2 { stroke: #30c830; stroke-width: 1; }
.r { stroke: #ee0000; stroke-width: 1; }
.w2 { stroke: #fff; stroke-width: 2; }
.wa { stroke: #fff; stroke-width: 1; fill: none; }
.wblob { stroke: #fff; stroke-width: 4; }
.wdash1 { stroke: #fff; stroke-width: 4; stroke-dasharray: 6 6 8 13 8 19 8 20 7 24 7 15 7 20 8 19 9 20 6 16 8 12 10 14 8 15 6 20; }
.wdash2 { stroke: #fff; stroke-width: 4; stroke-dasharray: 6 5 16 7 8 16 8 8 9 5 8 7 3 18 10 17 12 10 9 5 14 12 8 10 10 12 6 14; }
.wv1 { stroke: #fff; stroke-width: 4; stroke-dasharray: 4 19 7 18 10 2 8 16 7 14; }
.wv2 { stroke: #fff; stroke-width: 4; stroke-dasharray: 5 20 7 18 6 16 8 12 8 10; }
.c { stroke: #00e8e8; stroke-width: 1.500; fill: none; }
.c3 { stroke: #00e8e8; stroke-width: 3; }
.y2 { stroke: #f4f000; stroke-width: 2; }
.y1 { stroke: #f4f000; stroke-width: 1; }
.yw { stroke: #f4f000; stroke-width: 1.500; fill: none; }
.stair { stroke: #22dd22; stroke-width: 24; stroke-dasharray: 1 2; }
.m, .mg { fill: #f000f0; }
.mgs { stroke: #f000f0; fill: none; }
.gr { fill: #00ee00; }
.pk { stroke: #ff8484; stroke-width: 1.300; fill: none; }
.pk2 { stroke: #ff8484; stroke-width: 2; fill: none; }
.pkf { fill: #ff8484; }
.cmk { fill: #8a8a8a; stroke: #eee; }
.axc { stroke: #fff; stroke-width: 1; fill: none; }
.ptitle { font: bold 11px "Noto Sans CJK SC", sans-serif; fill: #11ee11; }
.ptitle2 { font: bold 10px "Liberation Mono", monospace; fill: #11ee11; }
.gnote { stroke: #11ee11; stroke-width: 1; }
.gnoteb { stroke: #00f000; stroke-width: 5; }
.gnoteb2 { stroke: #00f000; stroke-width: 4; }
.gdots { stroke: #11ee11; stroke-width: 4; stroke-dasharray: 2 1 3 .5 1 .5; }

.vplabel { position: absolute; left: 3px; top: 7px; color: #ccc; font-size: 12px; }
.cube { position: absolute; left: 1188px; top: 18px; width: 80px; height: 80px; }
.ring { position: absolute; inset: 0; border: 8px solid #424a52; border-radius: 50%; }
.face { position: absolute; left: 23px; top: 22px; width: 34px; height: 34px; background: #b4b4b4; padding: 5px; }
.faceinner { width: 22px; height: 22px; background: #a4a8ad; margin-left: 1px; position: relative; }
.f1 { position: absolute; left: 9px; top: 6px; width: 2px; height: 11px; background: #555; }
.f2 { position: absolute; left: 16px; top: 14px; width: 1px; height: 2px; background: #555; }
.dir { position: absolute; color: #b0b0b0; font-size: 13px; line-height: 14px; width: 14px; text-align: center; }
.n { left: 33px; top: -6px; }
.s-dir { left: 33px; top: 69px; }
.w { left: -4px; top: 32px; }
.e { left: 70px; top: 32px; }
.wcs { position: absolute; left: 1204px; top: 115px; width: 48px; height: 17px; background: #7d8090; border: 1px solid #8f92a0; border-radius: 4px; color: #b4b6c0; font: 11px "Liberation Sans", sans-serif; line-height: 15px; padding-left: 4px; }
.wcs i { position: absolute; right: 5px; top: 5px; border: 5px solid transparent; border-top: 5px solid #a8aab5; border-bottom: 0; }
.ucs { position: absolute; left: 8px; top: 388px; fill: none; stroke: #fff; stroke-width: 1; shape-rendering: crispEdges; }

/* command */
.cmdhist { height: 33px; flex: none; background: #c8c8c8; border-bottom: 1px solid #777; font: 12px/15px "Liberation Mono", "Noto Sans CJK SC", monospace; color: #222; padding: 3px 0 0 2px; }
.cmdline { height: 24px; flex: none; background: #fff; border-bottom: 1px solid #222; display: flex; align-items: center; padding: 2px 0 0 5px; gap: 4px; }
.cmdline b { font: bold 12px "Liberation Mono", monospace; color: #222; }

/* dialog */
.dialog { position: absolute; left: 482px; top: 272px; width: 356px; height: 186px; border-radius: 7px; border: 1px solid #3a3a3a; box-shadow: 0 0 0 1px #ddd inset, 0 0 9px 2px rgba(0,0,0,.75); background: linear-gradient(90deg, rgba(170,190,180,.6), rgba(70,115,90,.5) 22%, rgba(120,120,110,.45) 42%, rgba(150,115,135,.5) 60%, rgba(90,130,105,.5) 80%, rgba(170,190,180,.55)); backdrop-filter: blur(7px); }
.dlgtitle { position: absolute; left: 6px; top: 5px; font: 13px "Noto Sans", sans-serif; color: #111; }
.dlgclose { position: absolute; right: 5px; top: 0; width: 47px; height: 20px; background: linear-gradient(#dd9c8c, #c04a30 50%, #a02818 55%, #c86c58); border: 1px solid #5a3530; border-top: 0; border-radius: 0 0 4px 4px; color: #fff; text-align: center; font: bold 12px/19px "DejaVu Sans", sans-serif; }
.dlgbody { position: absolute; left: 4px; top: 28px; width: 345px; height: 149px; background: #fff; border: 1px solid #333; display: flex; flex-direction: column; }
.dlgmsg { flex: 1; display: flex; align-items: center; padding: 0 0 6px 25px; }
.warn { flex: none; margin-top: 1px; }
.wo { fill: #c8c8c8; stroke: #aaa; stroke-width: 1; }
.wi { fill: url(#warn); }
.wb { fill: #222; }
.dlgmsg p { margin: 0 0 0 9px; font: 12px "Noto Sans CJK SC", sans-serif; color: #222; }
.dlgfoot { height: 55px; flex: none; background: #f0f0f0; display: flex; justify-content: flex-end; align-items: flex-start; padding: 12px 9px 0 0; }
.ok { width: 86px; height: 28px; border: 2px solid #3aa4d8; border-radius: 3px; background: linear-gradient(#eaf6fc 45%, #bfe0f4 50%, #c8e6f6); color: #111; font: 12px "Noto Sans CJK SC", sans-serif; }
```
